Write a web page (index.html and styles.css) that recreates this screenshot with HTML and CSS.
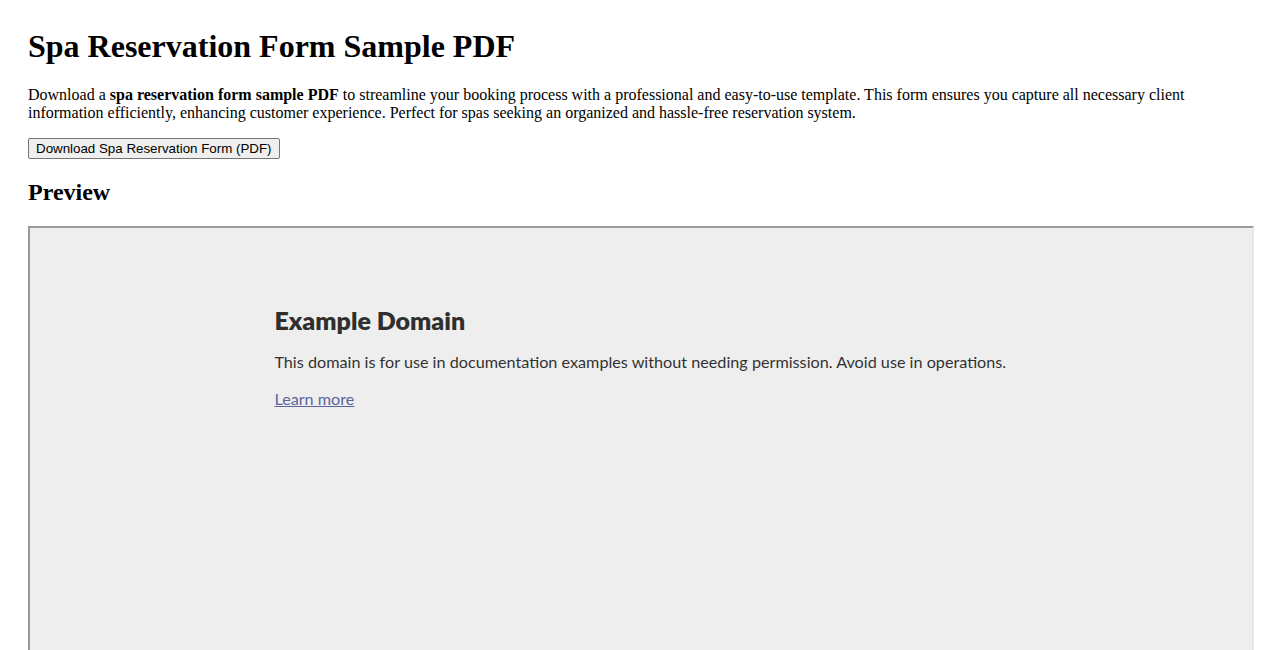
FILE: index.html
```html
<!DOCTYPE html>
<html lang="en">
<head>
  <meta charset="UTF-8">
  <title>Spa Reservation Form Sample PDF</title>
  <link rel="stylesheet" href="styles.css">
</head>
<body>
  <h1>Spa Reservation Form Sample PDF</h1>
  <p>Download a <strong>spa reservation form sample PDF</strong> to streamline your booking process with a professional and easy-to-use template. This form ensures you capture all necessary client information efficiently, enhancing customer experience. Perfect for spas seeking an organized and hassle-free reservation system.</p>

  <div class="download">
    <button type="button">Download Spa Reservation Form (PDF)</button>
  </div>

  <h2>Preview</h2>
  <div class="preview">
    <div class="domain">
      <h1>Example Domain</h1>
      <p>This domain is for use in documentation examples without needing permission. Avoid use in operations.</p>
      <p class="more"><a href="#">Learn more</a></p>
    </div>
  </div>
</body>
</html>
```

FILE: styles.css
```css
body {
  margin: 0;
  padding: 28px;
  font-family: "Liberation Serif", "Times New Roman", serif;
  color: #000;
  background: #fff;
}

h1 {
  font-size: 32px;
  margin: 0 0 21px;
}

p {
  font-size: 16px;
  margin: 16px 0;
}

.download {
  line-height: 1;
}

button {
  font-family: "Liberation Sans", Arial, sans-serif;
  font-size: 13.33px;
  padding: 2px 7px;
  border: 1px solid #767676;
  border-radius: 2px;
  background: #efefef;
  color: #000;
}

h2 {
  font-size: 24px;
  margin: 20px 0;
}

.preview {
  width: 100%;
  height: 600px;
  border: 2px solid;
  border-color: #9a9a9a #e6e6e6 #e6e6e6 #9a9a9a;
  background: #eee;
  overflow: hidden;
}

.domain {
  width: 60%;
  margin: 76px auto 0;
  font-family: Lato, "Noto Sans", sans-serif;
  opacity: 0.8;
}

.domain h1 {
  font-size: 25px;
  font-weight: 800;
  line-height: 32px;
  margin: 0;
}

.domain p {
  font-size: 16.2px;
  margin: 16px 0;
}

.domain .more {
  margin-top: 18px;
}

.domain a {
  color: #348;
}
```
